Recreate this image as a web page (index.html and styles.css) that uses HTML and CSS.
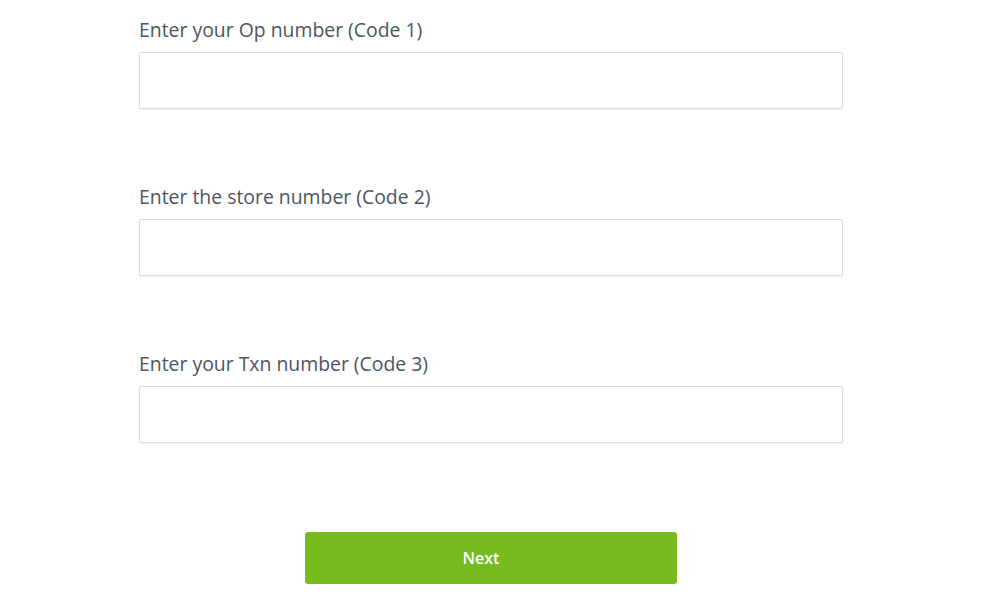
FILE: index.html
```html
<!DOCTYPE html>
<html>
<head>
<meta charset="utf-8">
<link rel="stylesheet" href="styles.css">
</head>
<body>
<form class="form">
  <div class="field">
    <label class="label" for="c1">Enter your Op number (Code 1)</label>
    <input class="input" id="c1" type="text">
  </div>
  <div class="field">
    <label class="label" for="c2">Enter the store number (Code 2)</label>
    <input class="input" id="c2" type="text">
  </div>
  <div class="field">
    <label class="label" for="c3">Enter your Txn number (Code 3)</label>
    <input class="input" id="c3" type="text">
  </div>
  <div class="actions">
    <button class="btn" type="button">Next</button>
  </div>
</form>
</body>
</html>
```
FILE: styles.css
```css
html, body {
  margin: 0;
  padding: 0;
  background: #fff;
}
body {
  font-family: "Open Sans", "Liberation Sans", sans-serif;
}
.form {
  width: 704px;
  margin-left: 139px;
  padding-top: 18px;
  display: flex;
  flex-direction: column;
  gap: 76px;
}
.field {
  display: flex;
  flex-direction: column;
  gap: 10px;
}
.label {
  font-size: 19.4px;
  line-height: 24px;
  color: #4b5661;
}
.input {
  box-sizing: border-box;
  height: 57px;
  width: 704px;
  margin: 0;
  border: 1px solid #dcdcdc;
  border-radius: 2px;
  box-shadow: 0 1px 2px rgba(0,0,0,0.06);
  background: #fff;
  font: inherit;
}
.actions {
  display: flex;
  justify-content: center;
  margin-top: 13px;
}
.btn {
  box-sizing: border-box;
  width: 372px;
  height: 52px;
  padding: 0 20px 0 0;
  border: none;
  border-radius: 3px;
  background: #77bb1f;
  color: #fff;
  font-family: "Open Sans", "Liberation Sans", sans-serif;
  font-weight: 600;
  font-size: 16px;
}
```
